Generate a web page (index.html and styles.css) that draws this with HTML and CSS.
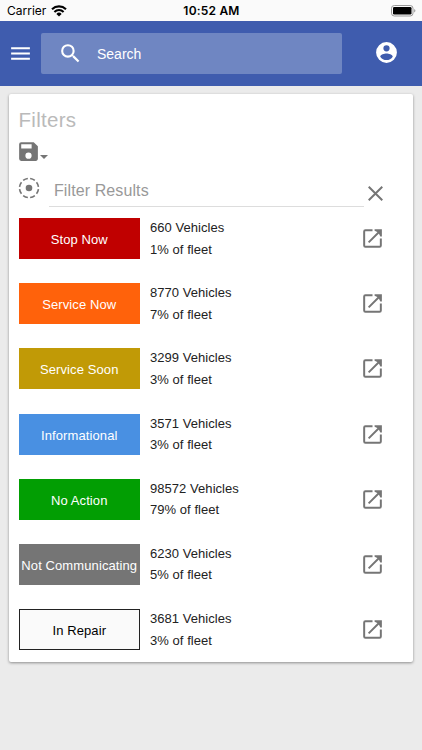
FILE: index.html
```
<!DOCTYPE html>
<html lang="en">
<head>
<meta charset="utf-8">
<title>Filters</title>
<link rel="stylesheet" href="styles.css">
</head>
<body>
<svg class="defs" aria-hidden="true">
  <symbol id="open" viewBox="0 0 24 24"><path d="M12 4H5.200Q4 4 4 5.200V18.800Q4 20 5.200 20H18.800Q20 20 20 18.800V12M8.300 15.700L19 5" fill="none" stroke="#757575" stroke-width="1.900"/><path d="M14 3h7v7h-1.500l-1.300-2.600-1.600-1.600L14 4.500z"/></symbol>
</svg>
<div class="status">
  <div class="carrier"><span>Carrier</span>
    <svg class="wifi" viewBox="0 0 16 12"><path d="M1 4.200A10.200 10.200 0 0 1 15 4.200M3.400 6.900A6.700 6.700 0 0 1 12.600 6.900" fill="none" stroke="#000" stroke-width="2.100"/><path d="M8 11.500L5.400 8.900a3.700 3.700 0 0 1 5.200 0z"/></svg>
  </div>
  <div class="time">10:52 AM</div>
  <svg class="battery" viewBox="0 0 25 12"><rect x=".5" y=".5" width="21.500" height="10.500" rx="2.800" fill="none" stroke="#999"/><rect x="2" y="2" width="18.500" height="7.500" rx="1.300"/><path d="M23.200 4v3.600q1.200-.5 1.200-1.800T23.200 4z" fill="#999"/></svg>
</div>
<header class="bar">
  <svg class="icon menu" viewBox="0 0 24 24"><path d="M3 18h18v-2H3v2zm0-5h18v-2H3v2zm0-7v2h18V6H3z"/></svg>
  <div class="search">
    <svg class="icon" viewBox="0 0 24 24"><path d="M15.500 14h-.79l-.28-.27A6.470 6.470 0 0 0 16 9.500 6.500 6.500 0 1 0 9.500 16c1.610 0 3.090-.59 4.230-1.570l.27.28v.79l5 4.990L20.490 19l-4.990-5zm-6 0a4.500 4.500 0 1 1 0-9 4.500 4.500 0 0 1 0 9z"/></svg>
    <span>Search</span>
  </div>
  <svg class="icon account" viewBox="0 0 24 24"><path d="M12 2a10 10 0 1 0 0 20 10 10 0 0 0 0-20zm0 3a3 3 0 1 1 0 6 3 3 0 0 1 0-6zm0 14.200a7.200 7.200 0 0 1-6-3.220c.03-1.990 4-3.080 6-3.080 1.990 0 5.970 1.090 6 3.080a7.200 7.200 0 0 1-6 3.220z"/></svg>
</header>
<main class="card">
  <h1>Filters</h1>
  <div class="save">
    <svg class="icon" viewBox="0 0 24 24"><path d="M17 3H5a2 2 0 0 0-2 2v14a2 2 0 0 0 2 2h14c1.100 0 2-.9 2-2V7l-4-4zm-5 16a3 3 0 1 1 0-6 3 3 0 0 1 0 6zm3-10H5V5h10v4z"/></svg>
    <i class="caret"></i>
  </div>
  <div class="filter">
    <svg class="target" viewBox="0 0 22 22"><circle cx="11" cy="11" r="9.500" fill="none" stroke="#757575" stroke-width="1.600" pathLength="80" stroke-dasharray="6.800 3.200" stroke-dashoffset="-1.600"/><circle cx="11" cy="11" r="3.300"/></svg>
    <div class="field">Filter Results</div>
    <svg class="icon close" viewBox="0 0 24 24"><path d="M5.500 5.500l13 13m0-13l-13 13" fill="none" stroke="#757575" stroke-width="1.900"/></svg>
  </div>
  <div class="rows">
    <div class="row"><div class="tag stop">Stop Now</div><div class="info">660 Vehicles<br>1% of fleet</div><svg class="icon"><use href="#open"/></svg></div>
    <div class="row"><div class="tag now">Service Now</div><div class="info">8770 Vehicles<br>7% of fleet</div><svg class="icon"><use href="#open"/></svg></div>
    <div class="row"><div class="tag soon">Service Soon</div><div class="info">3299 Vehicles<br>3% of fleet</div><svg class="icon"><use href="#open"/></svg></div>
    <div class="row"><div class="tag informational">Informational</div><div class="info">3571 Vehicles<br>3% of fleet</div><svg class="icon"><use href="#open"/></svg></div>
    <div class="row"><div class="tag ok">No Action</div><div class="info">98572 Vehicles<br>79% of fleet</div><svg class="icon"><use href="#open"/></svg></div>
    <div class="row"><div class="tag silent">Not Communicating</div><div class="info">6230 Vehicles<br>5% of fleet</div><svg class="icon"><use href="#open"/></svg></div>
    <div class="row"><div class="tag repair">In Repair</div><div class="info">3681 Vehicles<br>3% of fleet</div><svg class="icon"><use href="#open"/></svg></div>
  </div>
</main>
</body>
</html>
```
FILE: styles.css
```
* { box-sizing: border-box; }
body {
  margin: 0;
  height: 750px;
  overflow: hidden;
  background: #ebebeb;
  font-family: "Liberation Sans", Arial, sans-serif;
  font-size: 13px;
  color: #222;
}
svg { display: block; flex: none; }
.defs { display: none; }
.icon { width: 25px; height: 25px; fill: #757575; }
.status {
  height: 21px;
  padding: 0 6px 0 7px;
  display: grid;
  grid-template-columns: 1fr auto 1fr;
  align-items: center;
  background: #fafafa;
  color: #000;
  font-family: Inter, sans-serif;
  font-size: 12px;
}
.carrier { display: flex; align-items: center; gap: 5px; }
.wifi { width: 16px; height: 12px; }
.time { font-weight: 600; letter-spacing: .2px; }
.battery { width: 25px; height: 12px; justify-self: end; }
.bar {
  height: 65px;
  padding: 0 23.500px 0 8px;
  display: flex;
  align-items: center;
  background: #3f5cae;
}
.bar .icon { fill: #fff; }
.search {
  width: 301px;
  height: 41px;
  margin-left: 8px;
  padding-left: 17px;
  display: flex;
  align-items: center;
  gap: 14px;
  border-radius: 2px;
  background: #6f86c2;
  color: #fff;
  font-size: 14px;
}
.bar .account { margin: 0 0 2px auto; }
.card {
  width: 404.900px;
  height: 568px;
  margin: 8px 0 0 8.500px;
  padding: 14px 21px 0 10px;
  border-radius: 2px;
  background: #fff;
  box-shadow: 0 1px 3px rgba(0, 0, 0, .4);
}
h1 {
  margin: 0;
  font-size: 20.500px;
  line-height: 24px;
  font-weight: 400;
  letter-spacing: .3px;
  color: #bababa;
}
.save { display: flex; height: 25px; margin: 6.500px 0 0 -2.500px; }
.caret {
  margin: 16px 0 0 -1px;
  width: 0;
  height: 0;
  border: 4px solid transparent;
  border-top-color: #757575;
  border-bottom: 0;
}
.filter { display: flex; height: 35px; margin-top: 10.500px; }
.target { width: 22px; height: 22px; margin: 2.500px 9px 0 -.5px; fill: #757575; }
.field {
  width: 315px;
  height: 33px;
  padding-left: 5px;
  border-bottom: 1px solid #ddd;
  color: #999;
  font-size: 16px;
  letter-spacing: .1px;
  line-height: 34px;
}
.close { margin: 7px 0 0 -1px; }
.rows { display: grid; grid-auto-rows: 41px; row-gap: 24.200px; margin-top: 9px; }
.row { display: flex; align-items: center; }
.row .icon { margin-left: auto; margin-right: 7px; }
.tag {
  width: 121.500px;
  height: 41px;
  line-height: 43px;
  text-align: center;
  white-space: nowrap;
  letter-spacing: .1px;
  color: #fff;
}
.info { margin-left: 10px; line-height: 21.500px; letter-spacing: .05px; white-space: nowrap; }
.stop { background: #c00000; }
.now { background: #ff620b; }
.soon { background: #c19a06; }
.informational { background: #4990e2; }
.ok { background: #029e03; }
.silent { background: #757575; }
.repair { background: #fafafa; border: 1px solid #222; line-height: 42px; color: #000; }
```
